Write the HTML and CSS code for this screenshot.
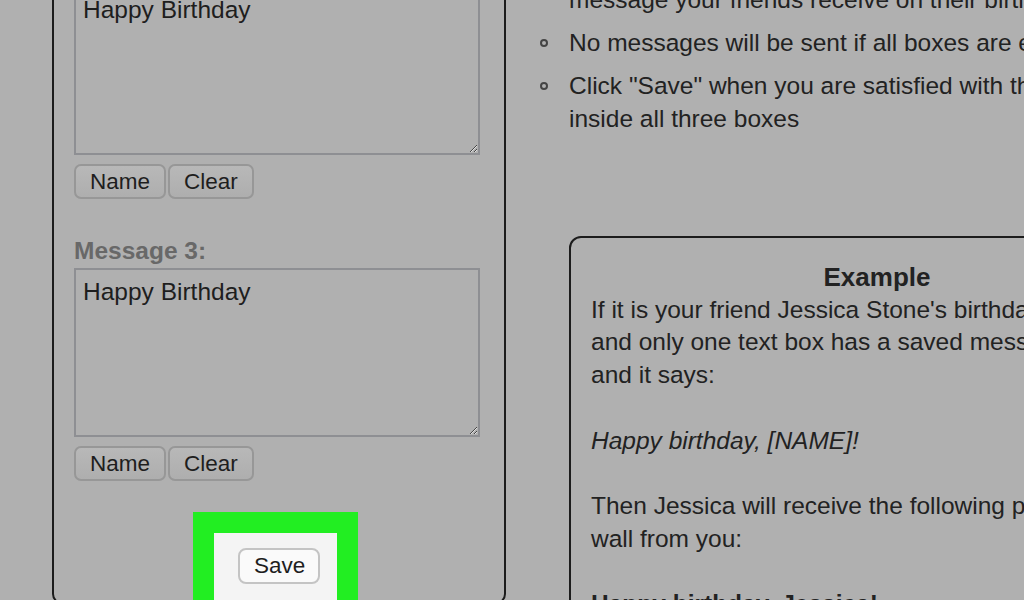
FILE: index.html
```html
<!DOCTYPE html>
<html lang="en">
<head>
    <meta charset="UTF-8">
    <meta name="viewport" content="width=device-width, initial-scale=1.0">
    <title>Birthday Messages</title>
    <link rel="stylesheet" href="styles.css">
</head>
<body>
    <div class="page">
        <section class="messages">
            <label class="msg-label" for="message2">Message 2:</label>
            <textarea id="message2" class="msg-box">Happy Birthday</textarea>
            <div class="msg-buttons">
                <button type="button" class="small-btn">Name</button>
                <button type="button" class="small-btn">Clear</button>
            </div>

            <label class="msg-label" for="message3">Message 3:</label>
            <textarea id="message3" class="msg-box">Happy Birthday</textarea>
            <div class="msg-buttons">
                <button type="button" class="small-btn">Name</button>
                <button type="button" class="small-btn">Clear</button>
            </div>

            <div class="save-highlight">
                <div class="save-area">
                    <button type="button" class="save-btn">Save</button>
                </div>
            </div>
        </section>

        <section class="help">
            <ul class="tips">
                <li>Type [NAME] where you want your friend's name in the<br>message your friends receive on their birthday</li>
                <li>No messages will be sent if all boxes are empty</li>
                <li>Click "Save" when you are satisfied with the text<br>inside all three boxes</li>
            </ul>

            <div class="example">
                <h3>Example</h3>
                <p>If it is your friend Jessica Stone's birthday,<br>
                and only one text box has a saved message,<br>
                and it says:<br>
                <br>
                <em>Happy birthday, [NAME]!</em><br>
                <br>
                Then Jessica will receive the following post on her<br>
                wall from you:<br>
                <br>
                <strong>Happy birthday, Jessica!</strong></p>
            </div>
        </section>
    </div>
</body>
</html>
```

FILE: styles.css
```css
html, body {
    overflow: hidden;
}
body {
    background-color: #B0B0B0;
    color: #222222;
    font-family: 'Liberation Sans', Arial, sans-serif;
    margin: 0;
    padding: 0;
}
.page {
    display: flex;
    align-items: flex-start;
    margin-top: -64px;
    padding-left: 52px;
    width: 1300px;
}

/* left column: message boxes */
.messages {
    border: 2px solid #1C1C1C;
    border-radius: 10px;
    box-sizing: border-box;
    display: flex;
    flex-direction: column;
    flex-shrink: 0;
    height: 668px;
    padding: 16px 24px 0 20px;
    width: 454px;
}
.messages > * {
    flex: none;
}
.msg-label {
    color: #686868;
    font-size: 24.5px;
    font-weight: bold;
    line-height: 30px;
    margin-bottom: 2px;
}
.msg-box {
    background-color: #B0B0B0;
    border: 2px solid #8E8F93;
    box-sizing: border-box;
    color: #1E1E1E;
    font-family: 'Liberation Sans', Arial, sans-serif;
    font-size: 24.5px;
    height: 169px;
    line-height: 28px;
    margin: 0;
    padding: 8px 7px 5px;
    width: 406px;
}
.msg-buttons {
    display: flex;
    gap: 2px;
    margin: 9px 0 37px;
}
.small-btn {
    background: linear-gradient(#B8B8B8, #AEAEAE);
    border: 2px solid #979797;
    border-radius: 7px;
    color: #1E1E1E;
    font-family: 'Liberation Sans', Arial, sans-serif;
    font-size: 22.5px;
    height: 35px;
    padding: 0 14px;
}

.save-highlight {
    align-self: center;
    background-color: #22EE22;
    margin-top: -6px;
    margin-right: 3px;
    padding: 21px;
}
.save-area {
    background-color: #F4F4F4;
    padding: 15px 17px 20px 24px;
}
.save-btn {
    background-color: #FAFAFA;
    border: 2px solid #C4C4C4;
    border-radius: 8px;
    color: #1E1E1E;
    font-family: 'Liberation Sans', Arial, sans-serif;
    font-size: 22.5px;
    height: 36px;
    padding: 0 14px;
    width: 82px;
}

/* right column: help text */
.help {
    flex-shrink: 0;
    font-size: 24.5px;
    line-height: 33px;
    margin-left: 63px;
    padding-top: 14px;
    width: 640px;
}
.tips {
    list-style: none;
    margin: 0;
    padding: 0;
}
.tips li {
    margin-bottom: 10px;
    position: relative;
}
.tips li::before {
    border: 2px solid #444444;
    border-radius: 50%;
    content: "";
    height: 4px;
    left: -29px;
    position: absolute;
    top: 13px;
    width: 4px;
}
.example {
    border: 2px solid #1C1C1C;
    border-radius: 12px;
    margin-top: 101px;
    padding: 23px 20px 20px;
    width: 572px;
}
.example h3 {
    font-size: 26px;
    line-height: 32.7px;
    margin: 0;
    text-align: center;
}
.example p {
    line-height: 32.7px;
    margin: 0;
}
```
